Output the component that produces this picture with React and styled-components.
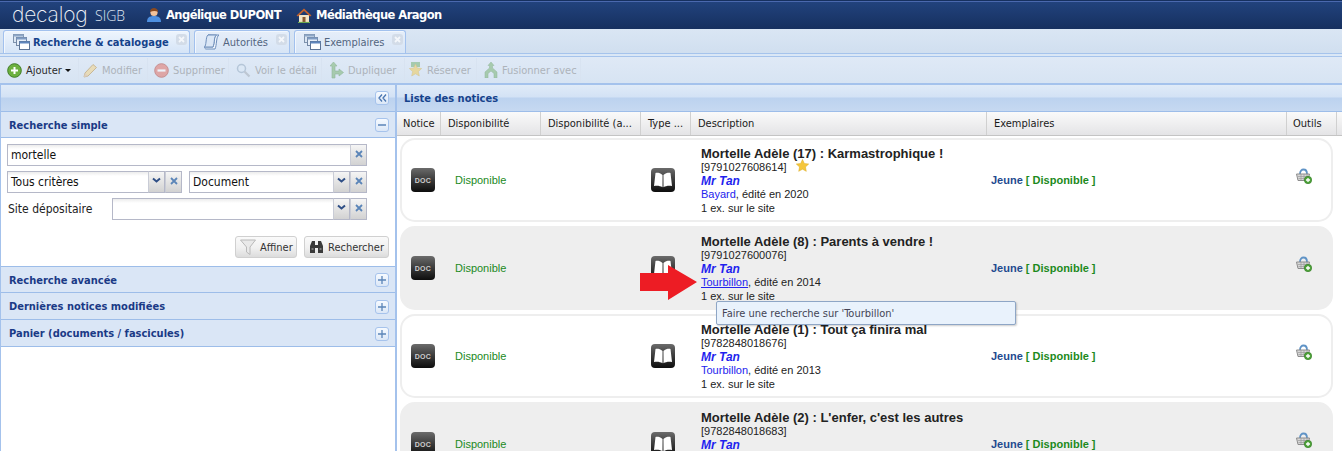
import React from "react";
import styled, { createGlobalStyle } from "styled-components";

const UI_FONT = `"DejaVu Sans Condensed", "Open Sans", sans-serif`;
const ROW_FONT = `"Liberation Sans", Arial, sans-serif`;

const Global = createGlobalStyle`
  html, body {
    margin: 0;
    padding: 0;
    height: 100%;
    overflow: hidden;
    background: #fff;
  }
  * { box-sizing: border-box; }
`;

const Page = styled.div`
  height: 451px;
  width: 1342px;
  display: flex;
  flex-direction: column;
  overflow: hidden;
  position: relative;
  font-family: ${UI_FONT};
  font-size: 11px;
`;

const TopBar = styled.div`
  height: 29px;
  flex: none;
  display: flex;
  align-items: center;
  padding-left: 12px;
  border-top: 1px solid #16305f;
  box-shadow: inset 0 1px 0 #4a68ae;
  background: linear-gradient(#22437e, #16305f);
  color: #fff;
`;

const Logo = styled.span`
  font-family: Inter, Roboto, sans-serif;
  font-weight: 200;
  font-size: 21px;
  line-height: 26px;
  letter-spacing: -0.2px;
  color: #eef2f8;
  width: 83px;
`;

const LogoSub = styled.span`
  font-family: "Open Sans", sans-serif;
  font-weight: 300;
  font-size: 14px;
  color: #dfe6f1;
  width: 51px;
`;

const UserInfo = styled.span`
  display: flex;
  align-items: center;
  gap: 4px;
  font-family: "DejaVu Sans", sans-serif;
  font-weight: 700;
  font-size: 11.5px;
  letter-spacing: -0.55px;
  width: ${(p) => p.$w}px;
`;

const TabStrip = styled.div`
  height: 28px;
  flex: none;
  display: flex;
  align-items: flex-end;
  gap: 4px;
  padding: 0 0 3px 3px;
  background: linear-gradient(#dae6f4, #cfdeef);
  border-bottom: 1px solid #a5c3ec;
  box-shadow: inset 0 -2px 0 #dae7f6, inset 0 -3px 0 #a5c3ec;
  position: relative;
`;

const Tab = styled.div`
  width: ${(p) => p.$w}px;
  height: 23px;
  display: flex;
  align-items: center;
  gap: 3px;
  padding-left: 9px;
  position: relative;
  border: 1px solid #a2c1ee;
  border-bottom: none;
  border-radius: 3px 3px 0 0;
  box-shadow: inset 1px 1px 0 #f2f7fd;
  background: ${(p) => (p.$active ? "linear-gradient(#eef5fd, #d5e4f7)" : "linear-gradient(#e6eef9, #d7e5f6)")};
  color: ${(p) => (p.$active ? "#15428b" : "#53657f")};
  font-weight: ${(p) => (p.$active ? 700 : 400)};
  font-size: 11px;
`;

const TabClose = styled.span`
  position: absolute;
  top: 3px;
  right: 2px;
  width: 11px;
  height: 11px;
  border-radius: 3px;
  background: #d3dce8;
  display: flex;
  align-items: center;
  justify-content: center;
`;

const Toolbar = styled.div`
  height: 28px;
  flex: none;
  display: flex;
  align-items: center;
  background: linear-gradient(#dfe9f6, #d7e4f3);
  border-bottom: 2px solid #a4c2ec;
`;

const ToolButton = styled.div`
  width: ${(p) => p.$w}px;
  height: 24px;
  flex: none;
  display: flex;
  align-items: center;
  gap: 4px;
  padding-left: ${(p) => p.$pl}px;
  border-right: 1px solid #d8e3f1;
  color: ${(p) => (p.$on ? "#2a2a2a" : "#adb3ba")};
  font-size: 11px;
  white-space: nowrap;
  & > svg {
    opacity: ${(p) => (p.$on ? 1 : 0.5)};
    flex: none;
  }
`;

const Caret = styled.span`
  width: 0;
  height: 0;
  margin-left: -1px;
  border-left: 3px solid transparent;
  border-right: 3px solid transparent;
  border-top: 3px solid #111;
`;

const Main = styled.div`
  flex: 1;
  min-height: 0;
  display: flex;
`;

const LeftPanel = styled.div`
  width: 395px;
  flex: none;
  border-left: 1px solid #a4c2ec;
  background: #fff;
  display: flex;
  flex-direction: column;
`;

const Splitter = styled.div`
  width: 2px;
  flex: none;
  background: #a4c2ec;
`;

const RightPanel = styled.div`
  flex: 1;
  min-width: 0;
  display: flex;
  flex-direction: column;
`;

const PanelTitle = styled.div`
  height: 27px;
  flex: none;
  display: flex;
  align-items: center;
  justify-content: ${(p) => (p.$right ? "flex-end" : "flex-start")};
  padding: ${(p) => (p.$right ? "0 6px 0 0" : "1px 0 0 7px")};
  background: linear-gradient(#e0ebf8 0, #d3e2f5 12px, #bcd2ef 13px, #c6d9f1 100%);
  border-bottom: 1px solid #9dbde9;
  color: #15428b;
  font-weight: 700;
  font-size: 11px;
`;

const SectionHead = styled.div`
  height: ${(p) => p.$h}px;
  flex: none;
  display: flex;
  align-items: center;
  justify-content: space-between;
  padding: 1px 6px 0 8px;
  background: #dae6f6;
  border-bottom: 1px solid #9dbde9;
  border-top: ${(p) => (p.$top ? "1px solid #9dbde9" : "none")};
  color: #1a3a86;
  font-weight: 700;
  font-size: 11px;
`;

const ToolBox = styled.span`
  width: 14px;
  height: 14px;
  display: flex;
  align-items: center;
  justify-content: center;
  background: linear-gradient(#f6faff, #dbe7f7);
  border: 1px solid #a6c3ec;
  border-radius: 3px;
`;

const Form = styled.div`
  height: 128px;
  flex: none;
  padding: 6px 0 0 6px;
  display: flex;
  flex-direction: column;
  gap: 5px;
`;

const FieldRow = styled.div`
  display: flex;
  align-items: center;
  width: 360px;
  height: 22px;
  gap: ${(p) => p.$gap || 0}px;
`;

const FieldGroup = styled.div`
  display: flex;
  flex: ${(p) => (p.$w ? "none" : 1)};
  width: ${(p) => (p.$w ? `${p.$w}px` : "auto")};
  height: 22px;
`;

const FieldInput = styled.div`
  flex: 1;
  min-width: 0;
  height: 22px;
  display: flex;
  align-items: center;
  padding-left: 3px;
  border: 1px solid #b5b8c8;
  border-right: none;
  background: linear-gradient(#ececec 0, #fff 4px);
  font-size: 12px;
  color: #111;
`;

const Trigger = styled.span`
  width: 17px;
  height: 22px;
  flex: none;
  display: flex;
  align-items: center;
  justify-content: center;
  padding-bottom: 3px;
  border: 1px solid #b5b8c8;
  border-left: 1px solid #c9ccd6;
  background: linear-gradient(#f5f5f5, #e0e0e0 60%, #d2d2d2);
`;

const SiteLabel = styled.span`
  width: 105px;
  flex: none;
  padding-left: 1px;
  font-size: 12px;
  color: #222;
`;

const FormActions = styled.div`
  display: flex;
  justify-content: flex-end;
  gap: 7px;
  margin-top: 11px;
  padding-right: 6px;
`;

const FormButton = styled.div`
  width: ${(p) => p.$w}px;
  height: 22px;
  display: flex;
  align-items: center;
  gap: 4px;
  padding-left: 4px;
  border: 1px solid #d0d0d0;
  border-radius: 3px;
  background: linear-gradient(#fafafa, #f0f0f0 55%, #dcdcdc);
  color: #333;
  font-size: 11px;
`;

const GridHeader = styled.div`
  height: 24px;
  flex: none;
  display: flex;
  background: linear-gradient(#fafafa, #e4e4e6);
  border-bottom: 1px solid #c4c4c4;
`;

const HeadCell = styled.div`
  width: ${(p) => p.$w}px;
  flex: none;
  display: flex;
  align-items: center;
  padding-left: ${(p) => p.$pl || 7}px;
  border-right: 1px solid #d0d0d0;
  font-size: 11px;
  color: #1a1a1a;
  white-space: nowrap;
`;

const RowList = styled.div`
  flex: 1;
  min-height: 0;
  overflow: hidden;
  display: flex;
  flex-direction: column;
  gap: 4px;
  padding: 2px 0 0 3px;
`;

const NoticeRow = styled.div`
  width: 933px;
  height: 84px;
  flex: none;
  display: grid;
  grid-template-columns: 39px 100px 100px 50px 296px 300px 44px;
  align-items: center;
  border: 2px solid #eeeeee;
  border-radius: 15px;
  background: ${(p) => (p.$alt ? "#eeeeee" : "#ffffff")};
  font-family: ${ROW_FONT};
  font-size: 11px;
  color: #222;
`;

const IconCell = styled.div`
  padding-left: ${(p) => p.$pl}px;
  display: flex;
`;

const DocBadge = styled.span`
  width: 24px;
  height: 24px;
  display: flex;
  align-items: center;
  justify-content: center;
  border-radius: 4px;
  background: linear-gradient(#6b6b6b, #3a3a3a 50%, #0d0d0d);
  color: #ccc;
  font-family: ${ROW_FONT};
  font-weight: 700;
  font-size: 7px;
  letter-spacing: 0.3px;
`;

const Status = styled.span`
  padding: 0 0 1px 14px;
  color: #1c8a1c;
`;

const Description = styled.div`
  padding-left: 10px;
  display: flex;
  flex-direction: column;
  align-self: start;
  padding-top: 6px;
`;

const Title = styled.div`
  font-size: 13px;
  font-weight: 700;
  line-height: 15px;
  height: 14px;
  color: #222;
  white-space: nowrap;
`;

const Line = styled.div`
  display: flex;
  align-items: center;
  gap: 9px;
  line-height: 14px;
  height: ${(p) => p.$h || 14}px;
  white-space: pre;
`;

const Author = styled.span`
  font-size: 12px;
  font-weight: 700;
  font-style: italic;
  color: #1f1fee;
`;

const Publisher = styled.span`
  color: #2323ee;
  text-decoration: ${(p) => (p.$hover ? "underline" : "none")};
`;

const Copies = styled.div`
  padding-left: 4px;
  font-weight: 700;
  color: #1f4a8f;
`;

const CopiesState = styled.span`
  color: #1c8a1c;
`;

const ToolCell = styled.div`
  padding: 0 0 8px 9px;
  display: flex;
`;

const Tooltip = styled.div`
  position: absolute;
  left: 716px;
  top: 301px;
  width: 300px;
  height: 24px;
  display: flex;
  align-items: center;
  padding-left: 5px;
  border: 1px solid #8ea6c6;
  border-radius: 2px;
  background: #e9f2fc;
  box-shadow: 1px 1px 2px rgba(0, 0, 0, 0.2);
  font-size: 11px;
  color: #445;
`;

const ArrowMark = styled.svg`
  position: absolute;
  left: 640px;
  top: 265px;
`;

const StarSlot = styled.span`
  display: flex;
  margin-top: -4px;
`;

const Chevron = () => (
  <svg width="9" height="7" viewBox="0 0 9 7">
    <path d="M1 1.5l3.5 3 3.5-3" fill="none" stroke="#2f4f86" strokeWidth="2" />
  </svg>
);

const ClearX = () => (
  <svg width="8" height="8" viewBox="0 0 8 8">
    <path d="M1 1l6 6M7 1L1 7" stroke="#5b85b8" strokeWidth="1.8" />
  </svg>
);

const TabX = () => (
  <svg width="7" height="7" viewBox="0 0 7 7">
    <path d="M1 1l5 5M6 1L1 6" stroke="#f4f7fb" strokeWidth="1.8" />
  </svg>
);

const WindowsIcon = () => (
  <svg width="17" height="16" viewBox="0 0 17 16">
    <rect x="0.5" y="0.5" width="10" height="8" fill="#dbe6f3" stroke="#7f93ad" />
    <rect x="0.5" y="0.5" width="10" height="2" fill="#8ea7c8" />
    <rect x="3.5" y="3.5" width="10" height="8" fill="#e6eef8" stroke="#7488a5" />
    <rect x="3.5" y="3.5" width="10" height="2" fill="#7f9cc4" />
    <rect x="6.5" y="7.5" width="10" height="8" fill="#fff" stroke="#5d7496" />
    <rect x="6.5" y="7.5" width="10" height="2" fill="#5f86bd" />
  </svg>
);

const ScrollIcon = () => (
  <svg width="16" height="17" viewBox="0 0 16 17">
    <path d="M4 1h11c-1.500 1-2 3-2.400 6S12 13 11 15H2c-1-.2-1.500-1-1.500-2H9c.8-2 1.200-5 1.500-8 .1-1 .6-3 1-3z" fill="#eef4fb" stroke="#6f8fbb" />
    <path d="M4 1c-1.500 1-1.600 4-2 7-.2 2-.6 4-1.500 5H9c.8-2 1.200-5 1.500-8 .1-1 .6-3 2-4z" fill="#dbe7f6" stroke="#6f8fbb" />
  </svg>
);

const PersonIcon = () => (
  <svg width="16" height="16" viewBox="0 0 16 16">
    <path d="M1 15c0-4 2-6 7-6s7 2 7 6z" fill="#4d8fe0" />
    <circle cx="8" cy="5.500" r="3.600" fill="#f3c39b" />
    <path d="M4 5c0-3 2-4 4-4s4 1 4 4c-2-1.500-5-1.500-8 0z" fill="#8a4a20" />
  </svg>
);

const HouseIcon = () => (
  <svg width="16" height="16" viewBox="0 0 16 16">
    <path d="M3 8v7h10V8z" fill="#f3e4c4" />
    <path d="M0.500 8.500L8 1.500l7.500 7-1.500 1L8 4 2 9.500z" fill="#c2622d" />
    <rect x="6.500" y="10" width="3" height="5" fill="#8a5a30" />
    <path d="M2 15.500h12" stroke="#6aa84f" strokeWidth="1.200" />
  </svg>
);

const AddIcon = () => (
  <svg width="15" height="15" viewBox="0 0 15 15">
    <circle cx="7.500" cy="7.500" r="6.800" fill="#6db13f" stroke="#3f7d24" />
    <path d="M4 7.500h7M7.500 4v7" stroke="#fff" strokeWidth="2" />
  </svg>
);

const PencilIcon = () => (
  <svg width="15" height="15" viewBox="0 0 15 15">
    <path d="M1 14l1-4 8-8.500 3.500 3L5 13z" fill="#f5d27e" stroke="#b58a3c" />
    <path d="M1 14l1-4 3 3z" fill="#e2b98c" />
  </svg>
);

const MinusIcon = () => (
  <svg width="15" height="15" viewBox="0 0 15 15">
    <circle cx="7.500" cy="7.500" r="6.800" fill="#e2675a" stroke="#b23b30" />
    <path d="M3.500 7.500h8" stroke="#fff" strokeWidth="2.200" />
  </svg>
);

const SearchIcon = () => (
  <svg width="15" height="15" viewBox="0 0 15 15">
    <circle cx="5.500" cy="5.500" r="4" fill="#dce9f6" stroke="#8fa6bd" strokeWidth="1.500" />
    <path d="M8.500 8.500l5 5" stroke="#a2a9b2" strokeWidth="2.200" />
  </svg>
);

const DuplicateIcon = () => (
  <svg width="14" height="17" viewBox="0 0 14 17">
    <path d="M2 16V4H0l3.500-4L7 4H5v5h4V7l4.500 3.500L9 14v-2H5v4z" fill="#74b06a" stroke="#4a8a44" strokeWidth="0.600" />
  </svg>
);

const StarIcon = ({ size = 14 }) => (
  <svg width={size} height={size} viewBox="0 0 14 14">
    <path d="M7 .5l2 4.300 4.700.6-3.500 3.200.9 4.700L7 11l-4.100 2.300.9-4.700L.3 5.400 5 4.800z" fill="#f5c63c" stroke="#dba91f" strokeWidth="0.500" />
  </svg>
);

const ReserveIcon = () => (
  <svg width="15" height="16" viewBox="0 0 15 16">
    <rect x="3" y="0" width="9" height="5" fill="#6fae6a" />
    <path d="M7.500 2l1.800 4 4.400.5-3.300 3 .9 4.500-3.800-2.200L3.700 14l.9-4.500-3.300-3L5.700 6z" fill="#f2c94c" stroke="#cda22a" strokeWidth="0.500" />
  </svg>
);

const MergeIcon = () => (
  <svg width="14" height="16" viewBox="0 0 14 16">
    <path d="M7 0l3 3.500H8.500V6L13 10v6h-3v-4.500L7 9l-3 2.500V16H1v-6l4.500-4V3.500H4z" fill="#74b06a" stroke="#4a8a44" strokeWidth="0.500" />
  </svg>
);

const FunnelIcon = () => (
  <svg width="16" height="16" viewBox="0 0 16 16">
    <path d="M.5 1h15L10 8v7.500L6.500 13V8z" fill="#e9e9e9" stroke="#b9b9b9" />
  </svg>
);

const BinocularsIcon = () => (
  <svg width="15" height="14" viewBox="0 0 15 14">
    <path d="M1 6l2-5h3v4h3V1h3l2 5v7H9V8H6v5H1z" fill="#3b3b3b" />
    <path d="M2.500 9h2M10.500 9h2" stroke="#bbb" />
  </svg>
);

const BookIcon = () => (
  <svg width="24" height="24" viewBox="0 0 24 24">
    <defs>
      <linearGradient id="bookBg" x1="0" y1="0" x2="0" y2="1">
        <stop offset="0" stopColor="#6b6b6b" />
        <stop offset="0.5" stopColor="#3a3a3a" />
        <stop offset="1" stopColor="#0d0d0d" />
      </linearGradient>
    </defs>
    <rect width="24" height="24" rx="4" fill="url(#bookBg)" />
    <path d="M11.500 7C9.500 5 6.500 4.600 4.500 5L3 18c3-.6 6-.4 8.500 1.300zM12.500 7c2-2 5-2.400 7-2l1.500 13c-3-.6-6-.4-8.500 1.300z" fill="#fff" />
  </svg>
);

const BasketIcon = () => (
  <svg width="16" height="16" viewBox="0 0 16 16">
    <path d="M4 6c0-6 7-6 7 0" fill="none" stroke="#5f93c6" strokeWidth="1.800" />
    <path d="M.5 6h13l-1.500 6.500H2z" fill="#d8d8d8" stroke="#8c8c8c" />
    <path d="M2 8.500h10.500M2.500 10.500h9.500M5 6v6M8 6v6M11 6v6" stroke="#9a9a9a" strokeWidth="0.700" />
    <circle cx="12" cy="12" r="3.700" fill="#4fa33a" stroke="#2f7a22" strokeWidth="0.600" />
    <path d="M10 12h4M12 10v4" stroke="#fff" strokeWidth="1.300" />
  </svg>
);

const ClearedField = ({ w, arrow, label }) => (
  <FieldGroup $w={w}>
    <FieldInput>{label}</FieldInput>
    {arrow && (
      <Trigger>
        <Chevron />
      </Trigger>
    )}
    <Trigger>
      <ClearX />
    </Trigger>
  </FieldGroup>
);

const sections = [
  { label: "Recherche avancée", h: 27, top: true },
  { label: "Dernières notices modifiées", h: 27 },
  { label: "Panier (documents / fascicules)", h: 27 },
];

const columns = [
  { label: "Notice", w: 44, pl: 6 },
  { label: "Disponibilité", w: 100 },
  { label: "Disponibilité (a...", w: 100 },
  { label: "Type ...", w: 50 },
  { label: "Description", w: 296 },
  { label: "Exemplaires", w: 300 },
  { label: "Outils", w: 50, pl: 6 },
];

const notices = [
  { title: "Mortelle Adèle (17) : Karmastrophique !", isbn: "9791027608614", publisher: "Bayard", year: 2020, star: true },
  { title: "Mortelle Adèle (8) : Parents à vendre !", isbn: "9791027600076", publisher: "Tourbillon", year: 2014, hover: true },
  { title: "Mortelle Adèle (1) : Tout ça finira mal", isbn: "9782848018676", publisher: "Tourbillon", year: 2013 },
  { title: "Mortelle Adèle (2) : L'enfer, c'est les autres", isbn: "9782848018683", publisher: "Tourbillon", year: 2013 },
];

const App = () => {
  return (
    <Page>
      <Global />
      <TopBar>
        <Logo>decalog</Logo>
        <LogoSub>SIGB</LogoSub>
        <UserInfo $w={150}>
          <PersonIcon />
          Angélique DUPONT
        </UserInfo>
        <UserInfo $w={150}>
          <HouseIcon />
          Médiathèque Aragon
        </UserInfo>
      </TopBar>

      <TabStrip>
        <Tab $active $w={187}>
          <WindowsIcon />
          Recherche & catalogage
          <TabClose><TabX /></TabClose>
        </Tab>
        <Tab $w={96}>
          <ScrollIcon />
          Autorités
          <TabClose><TabX /></TabClose>
        </Tab>
        <Tab $w={112}>
          <WindowsIcon />
          Exemplaires
          <TabClose><TabX /></TabClose>
        </Tab>
      </TabStrip>

      <Toolbar>
        <ToolButton $on $w={79} $pl={7}>
          <AddIcon />
          Ajouter
          <Caret />
        </ToolButton>
        <ToolButton $w={69} $pl={4}>
          <PencilIcon />
          Modifier
        </ToolButton>
        <ToolButton $w={81} $pl={6}>
          <MinusIcon />
          Supprimer
        </ToolButton>
        <ToolButton $w={93} $pl={7}>
          <SearchIcon />
          Voir le détail
        </ToolButton>
        <ToolButton $w={83} $pl={8}>
          <DuplicateIcon />
          Dupliquer
        </ToolButton>
        <ToolButton $w={72} $pl={3}>
          <ReserveIcon />
          Réserver
        </ToolButton>
        <ToolButton $w={104} $pl={7}>
          <MergeIcon />
          Fusionner avec
        </ToolButton>
      </Toolbar>

      <Main>
        <LeftPanel>
          <PanelTitle $right>
            <ToolBox>
              <svg width="9" height="8" viewBox="0 0 9 8">
                <path d="M4 .5L1 4l3 3.500M8 .5L5 4l3 3.500" fill="none" stroke="#4a76b0" strokeWidth="1.300" />
              </svg>
            </ToolBox>
          </PanelTitle>
          <SectionHead $h={26}>
            Recherche simple
            <ToolBox>
              <svg width="8" height="2" viewBox="0 0 8 2">
                <path d="M0 1h8" stroke="#5b85b8" strokeWidth="1.500" />
              </svg>
            </ToolBox>
          </SectionHead>
          <Form>
            <FieldRow>
              <ClearedField label="mortelle" />
            </FieldRow>
            <FieldRow $gap={7}>
              <ClearedField w={175} arrow label="Tous critères" />
              <ClearedField w={178} arrow label="Document" />
            </FieldRow>
            <FieldRow>
              <SiteLabel>Site dépositaire</SiteLabel>
              <ClearedField arrow />
            </FieldRow>
            <FormActions>
              <FormButton $w={62}>
                <FunnelIcon />
                Affiner
              </FormButton>
              <FormButton $w={85}>
                <BinocularsIcon />
                Rechercher
              </FormButton>
            </FormActions>
          </Form>
          {sections.map((section) => (
            <SectionHead key={section.label} $h={section.h} $top={section.top}>
              {section.label}
              <ToolBox>
                <svg width="8" height="8" viewBox="0 0 8 8">
                  <path d="M0 4h8M4 0v8" stroke="#5b85b8" strokeWidth="1.300" />
                </svg>
              </ToolBox>
            </SectionHead>
          ))}
        </LeftPanel>
        <Splitter />
        <RightPanel>
          <PanelTitle>Liste des notices</PanelTitle>
          <GridHeader>
            {columns.map((col) => (
              <HeadCell key={col.label} $w={col.w} $pl={col.pl}>
                {col.label}
              </HeadCell>
            ))}
          </GridHeader>
          <RowList>
            {notices.map((notice, i) => (
              <NoticeRow key={notice.isbn} $alt={i % 2 === 1}>
                <IconCell $pl={9}>
                  <DocBadge>DOC</DocBadge>
                </IconCell>
                <Status>Disponible</Status>
                <span />
                <IconCell $pl={10}>
                  <BookIcon />
                </IconCell>
                <Description>
                  <Title>{notice.title}</Title>
                  <Line>
                    [{notice.isbn}]
                    {notice.star && (
                      <StarSlot>
                        <StarIcon size={13} />
                      </StarSlot>
                    )}
                  </Line>
                  <Line $h={13}>
                    <Author>Mr Tan</Author>
                  </Line>
                  <Line>
                    <span>
                      <Publisher $hover={notice.hover}>{notice.publisher}</Publisher>, édité en {notice.year}
                    </span>
                  </Line>
                  <Line>1 ex. sur le site</Line>
                </Description>
                <Copies>
                  Jeune <CopiesState>[ Disponible ]</CopiesState>
                </Copies>
                <ToolCell>
                  <BasketIcon />
                </ToolCell>
              </NoticeRow>
            ))}
          </RowList>
        </RightPanel>
      </Main>

      <ArrowMark width="57" height="35" viewBox="0 0 57 35">
        <path d="M0 8h28V0l29 17-29 18v-9H0z" fill="#ed1c24" />
      </ArrowMark>
      <Tooltip>Faire une recherche sur 'Tourbillon'</Tooltip>
    </Page>
  );
};

export default App;
